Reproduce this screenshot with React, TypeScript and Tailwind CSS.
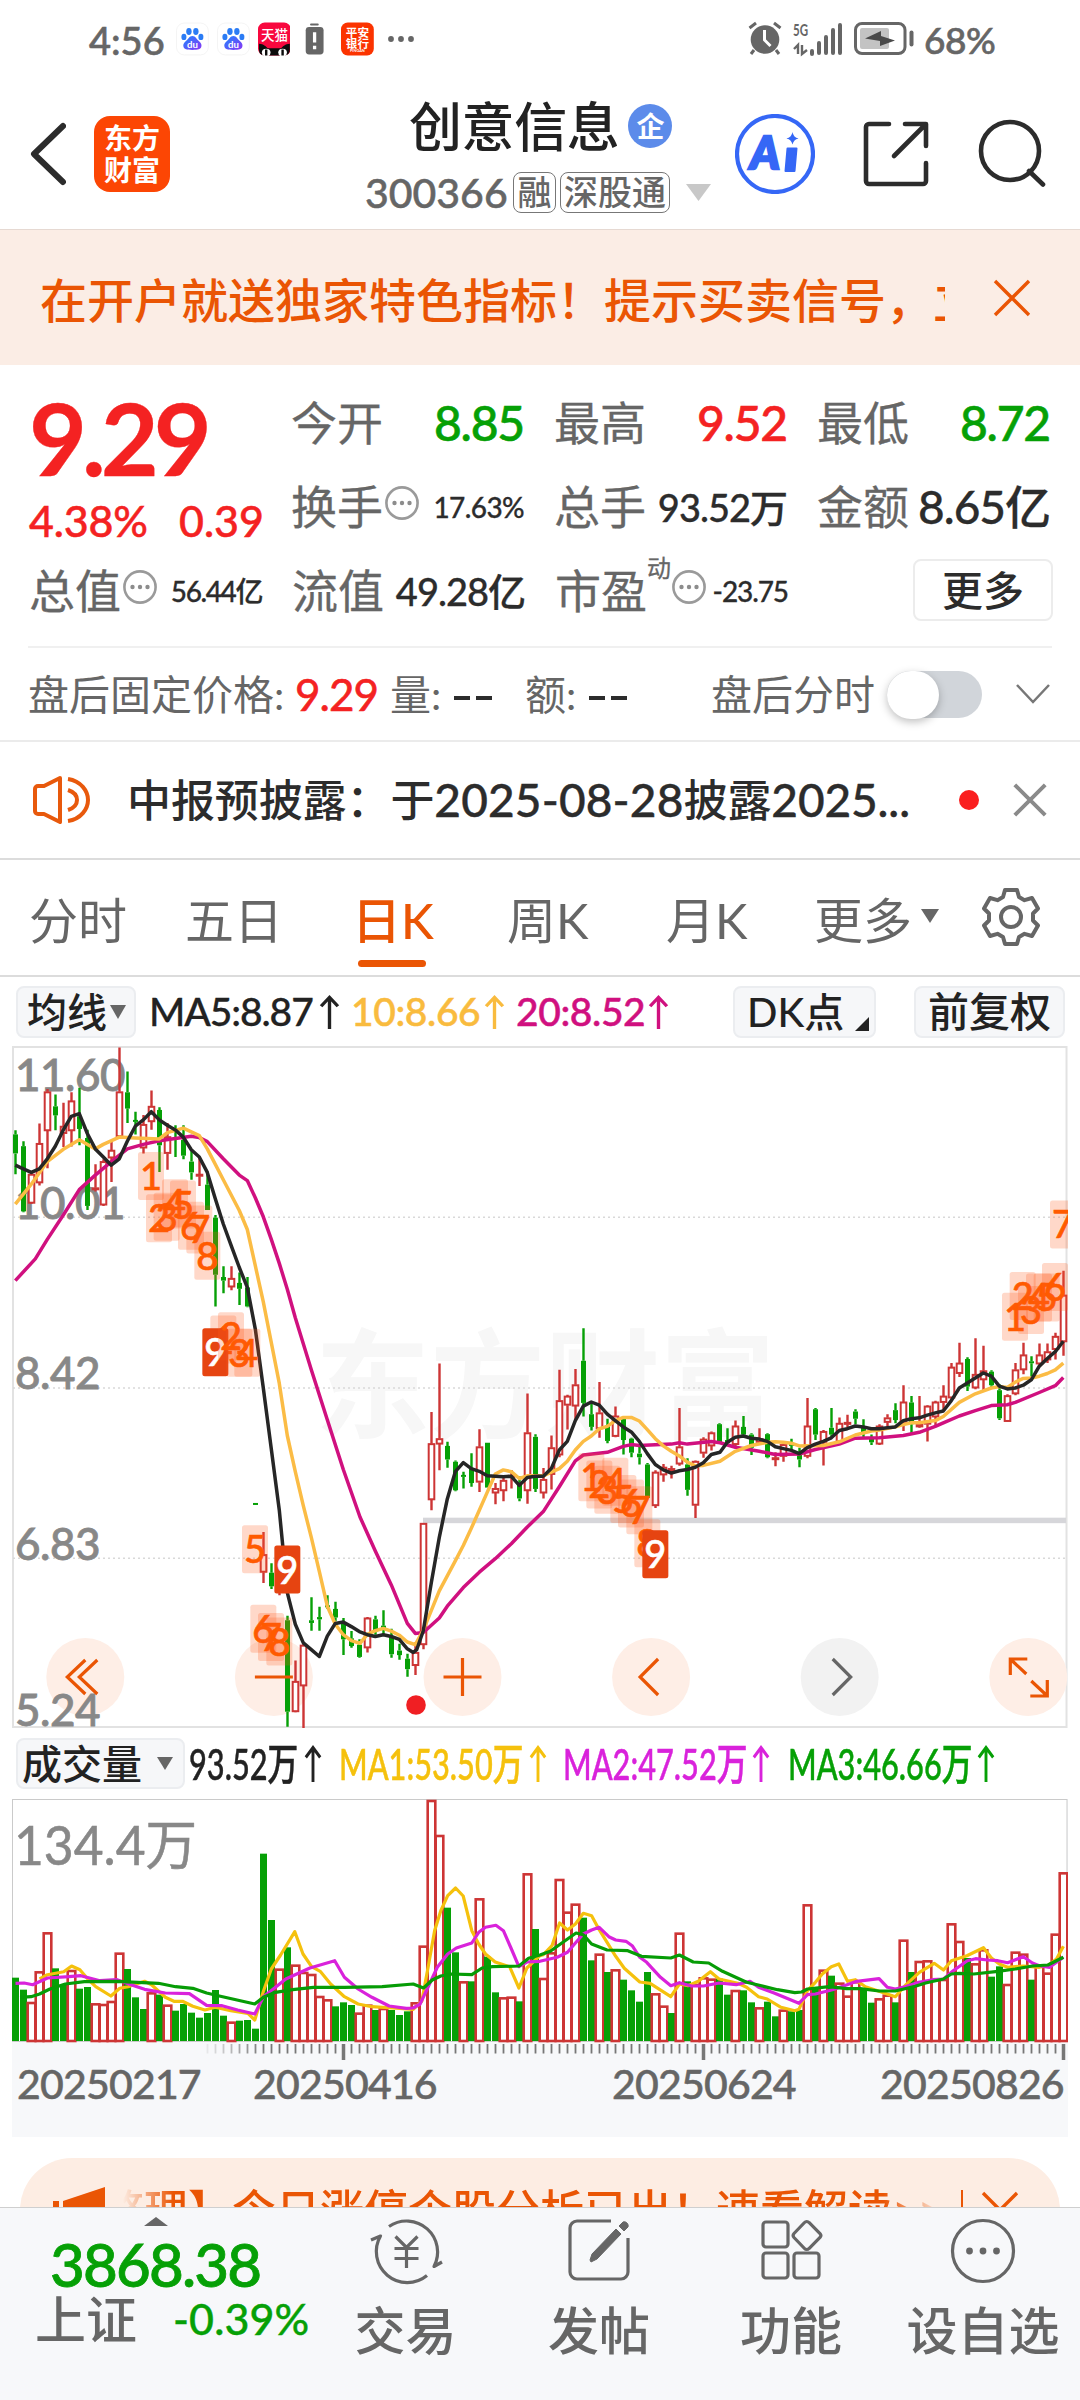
import React from 'react';

type Candle = [number, number, number, number, number];

// rise flag, high, body top, body bottom, low
const candles: Candle[] = [
  [0, 221, 230, 272, 318], [0, 245, 256, 400, 402], [1, 312, 318, 382, 384], [1, 206, 250, 337, 343],
  [1, 130, 136, 222, 305], [0, 142, 168, 188, 221], [1, 160, 212, 228, 258], [1, 137, 156, 222, 257],
  [0, 127, 190, 218, 254], [0, 220, 238, 388, 397], [1, 296, 348, 352, 356], [1, 285, 290, 386, 388],
  [1, 247, 265, 282, 335], [1, 38, 136, 235, 237], [0, 91, 137, 173, 205], [0, 180, 198, 202, 230],
  [1, 187, 208, 260, 272], [1, 133, 168, 202, 220], [0, 170, 176, 254, 313], [1, 205, 235, 272, 308],
  [0, 210, 236, 240, 280], [0, 210, 242, 277, 285], [0, 265, 290, 314, 330], [1, 282, 318, 322, 344],
  [0, 312, 341, 397, 397], [0, 408, 414, 540, 610], [0, 521, 545, 553, 581], [1, 521, 548, 567, 574],
  [0, 535, 558, 571, 607], [0, 545, 568, 610, 612], [0, 1044, 1044, 1048, 1048], [1, 1108, 1158, 1197, 1221],
  [0, 1177, 1198, 1228, 1234], [1, 1190, 1200, 1240, 1248], [0, 1293, 1303, 1505, 1538], [1, 1392, 1438, 1505, 1506],
  [1, 1352, 1358, 1448, 1543], [0, 1252, 1303, 1309, 1326], [0, 1273, 1296, 1301, 1326], [0, 1248, 1270, 1274, 1278],
  [0, 1262, 1278, 1297, 1305], [0, 1298, 1310, 1345, 1380], [0, 1327, 1343, 1360, 1364], [0, 1345, 1357, 1384, 1386],
  [1, 1296, 1298, 1364, 1374], [0, 1293, 1301, 1328, 1335], [0, 1281, 1315, 1320, 1338], [0, 1322, 1340, 1378, 1386],
  [0, 1355, 1370, 1380, 1390], [0, 1377, 1388, 1411, 1428], [1, 1352, 1374, 1403, 1424], [1, 1088, 1089, 1357, 1367],
  [1, 843, 913, 1037, 1060], [1, 736, 902, 914, 972], [0, 909, 918, 948, 966], [0, 950, 953, 1016, 1018],
  [0, 975, 982, 986, 1012], [0, 934, 968, 1000, 1008], [1, 881, 920, 998, 1020], [0, 911, 911, 1010, 1010],
  [1, 1000, 1012, 1022, 1047], [1, 985, 994, 1017, 1040], [1, 971, 983, 987, 1012], [0, 985, 998, 1034, 1040],
  [1, 802, 889, 1017, 1046], [0, 892, 898, 1013, 1020], [1, 967, 992, 1022, 1034], [1, 895, 922, 981, 1014],
  [1, 750, 818, 938, 943], [1, 805, 808, 828, 882], [1, 748, 783, 830, 860], [0, 658, 730, 823, 853],
  [0, 825, 848, 876, 884], [1, 777, 845, 880, 900], [0, 858, 873, 907, 912], [1, 831, 852, 897, 899],
  [0, 855, 858, 905, 937], [0, 900, 902, 933, 943], [0, 915, 935, 943, 959], [0, 956, 959, 1033, 1034],
  [1, 972, 976, 1050, 1055], [1, 958, 965, 982, 997], [1, 962, 968, 972, 990], [1, 834, 920, 958, 962],
  [0, 945, 959, 1015, 1028], [1, 950, 952, 1049, 1077], [1, 899, 903, 934, 944], [1, 886, 889, 918, 928],
  [0, 868, 870, 910, 911], [0, 879, 905, 912, 913], [1, 862, 874, 915, 920], [0, 852, 876, 893, 900],
  [0, 890, 893, 922, 938], [1, 879, 902, 910, 914], [0, 890, 892, 943, 945], [1, 932, 944, 947, 963],
  [1, 912, 915, 941, 953], [0, 902, 912, 918, 930], [0, 922, 935, 948, 965], [1, 812, 874, 941, 945],
  [0, 834, 837, 893, 905], [1, 883, 886, 910, 961], [0, 834, 878, 893, 900], [1, 855, 868, 909, 913],
  [1, 849, 866, 869, 878], [0, 837, 842, 858, 870], [0, 859, 877, 890, 900], [0, 893, 900, 910, 916],
  [1, 870, 874, 914, 916], [1, 848, 856, 866, 875], [0, 824, 839, 861, 868], [1, 784, 821, 866, 885],
  [0, 808, 822, 870, 890], [1, 808, 870, 876, 878], [1, 828, 830, 870, 908], [1, 818, 821, 854, 872],
  [1, 784, 808, 822, 840], [1, 735, 744, 812, 815], [1, 690, 735, 758, 766], [0, 722, 726, 787, 797],
  [1, 680, 760, 790, 793], [1, 697, 752, 772, 797], [0, 751, 754, 784, 788], [0, 782, 795, 857, 861],
  [1, 804, 807, 864, 865], [1, 735, 750, 803, 806], [1, 690, 717, 750, 760], [0, 720, 731, 734, 765],
  [1, 692, 717, 737, 742], [1, 692, 710, 728, 735], [1, 668, 676, 705, 727], [1, 531, 585, 688, 719],
];

const ma5 =
  '46,298 70,306 94,314 118,306 142,284 166,256 190,220 214,190 238,184 262,228 286,262 310,280 334,298 358,284 382,245 406,212 430,198 454,180 478,198 502,210 526,220 550,236 574,264 598,280 622,314 646,372 670,428 694,476 718,524 742,568 766,660 790,790 814,925 838,1060 862,1242 886,1312 910,1353 934,1368 958,1383 982,1338 1006,1310 1030,1307 1054,1317 1078,1328 1102,1335 1126,1339 1150,1335 1174,1339 1198,1345 1222,1366 1240,1374 1250,1368 1270,1326 1294,1220 1318,1120 1342,1035 1366,975 1390,955 1414,968 1438,974 1462,984 1510,986 1534,985 1558,1005 1582,988 1606,985 1630,985 1654,968 1678,927 1702,908 1726,862 1750,830 1774,821 1798,828 1822,848 1846,862 1870,876 1894,887 1918,908 1942,935 1966,959 1990,971 2014,978 2038,973 2062,970 2086,965 2110,955 2134,937 2160,932 2182,910 2206,899 2230,896 2254,901 2278,903 2302,908 2326,920 2350,924 2374,928 2398,935 2422,922 2446,914 2470,908 2494,900 2518,884 2542,880 2566,874 2590,876 2614,880 2638,880 2662,878 2686,876 2710,862 2734,858 2758,856 2782,850 2806,845 2830,841 2854,818 2878,790 2902,779 2926,768 2950,757 2974,764 2998,786 3022,792 3046,790 3070,784 3094,772 3118,742 3142,725 3166,710 3190,687';
const ma10 =
  '46,384 94,340 142,290 190,263 238,242 286,262 310,252 358,236 406,238 478,240 502,226 550,216 598,233 622,262 670,330 718,398 742,440 766,520 790,600 814,690 838,780 862,895 886,975 910,1050 934,1120 958,1195 982,1272 1006,1312 1030,1335 1054,1348 1080,1354 1102,1334 1126,1326 1150,1321 1174,1327 1198,1336 1222,1351 1246,1357 1270,1325 1318,1238 1366,1172 1390,1138 1414,1100 1438,1060 1462,1020 1486,980 1510,971 1534,975 1558,990 1582,984 1630,984 1654,976 1678,968 1702,952 1726,927 1750,908 1774,896 1798,880 1822,875 1846,862 1870,855 1894,855 1918,863 1942,882 1966,902 1990,918 2014,930 2038,940 2062,954 2086,962 2110,961 2160,952 2206,930 2254,917 2302,910 2326,909 2350,910 2374,912 2398,918 2470,917 2518,909 2566,894 2614,885 2638,883 2686,876 2710,871 2734,867 2758,867 2806,862 2830,853 2878,822 2926,803 2974,790 2998,787 3022,789 3046,777 3070,769 3094,768 3118,764 3142,758 3166,750 3190,735';
const ma20 =
  '46,553 106,505 142,462 190,408 238,352 286,320 334,290 382,262 430,252 478,244 526,239 574,234 598,237 622,246 670,284 718,320 742,332 766,370 790,412 814,462 838,515 862,572 886,635 934,750 982,860 1030,970 1080,1075 1126,1150 1174,1225 1222,1310 1246,1332 1270,1330 1318,1298 1342,1272 1390,1231 1438,1197 1486,1167 1534,1134 1582,1097 1630,1063 1678,1008 1726,951 1750,938 1822,932 1870,919 1894,915 1918,917 2014,914 2038,911 2062,914 2134,908 2160,911 2206,921 2278,930 2326,937 2398,936 2446,926 2518,914 2566,901 2638,900 2710,895 2758,888 2806,875 2830,867 2878,852 2926,840 2974,829 3022,827 3046,822 3118,800 3166,785 3190,767';

// label, centre x, centre y
const signals: [number, number, number][] = [
  [1, 453, 322], [2, 477, 415], [3, 500, 412], [4, 525, 382], [5, 549, 385], [6, 573, 432], [7, 598, 440], [8, 622, 498],
  [1, 670, 683], [9, 646, 711], [2, 693, 676], [3, 718, 712], [4, 742, 712], [5, 765, 1146], [6, 790, 1322], [7, 813, 1340], [8, 838, 1350], [9, 862, 1191],
  [1, 1774, 987], [2, 1798, 1003], [3, 1822, 1015], [4, 1846, 997], [5, 1870, 1035], [6, 1893, 1045], [7, 1918, 1060], [8, 1942, 1133], [9, 1966, 1157],
  [1, 3045, 633], [2, 3068, 587], [3, 3093, 618], [4, 3117, 590], [5, 3140, 590], [6, 3165, 567], [7, 3189, 429],
];

// negative = falling day
const volumes = [
  -741, -777, 814, 722, 605, -713, -760, 718, -774, -769, 818, 820, 811, 666, -715, -800, -835, 785, -792, 822, -840, -820,
  -846, -861, -847, -778, -855, 873, -870, -868, -894, -369, -568, 714, -650, 702, 724, 730, 796, 806, -827, -815, -823, 846,
  822, -838, 832, -838, -853, -842, 815, 645, 208, 313, -531, -665, 752, -752, 503, -678, -785, 800, 798, -812, 428, -595,
  742, 665, 445, 543, 519, -561, -689, 669, -724, 716, -747, -779, -813, -724, 788, 825, -847, 606, -752, 760, 740, 744,
  -744, -792, 778, -779, -815, 830, -813, -857, 837, -842, -838, 521, -772, 717, -735, 756, 795, 752, -778, -816, 803, 792,
  -815, 627, -724, 691, 689, 745, 745, 578, 631, -682, 698, 656, -738, -707, 760, 663, 669, -747, 705, 726, 609, 425,
];

const volMa1 =
  '115,745 138,732 185,723 208,706 232,717 255,745 278,768 322,796 348,773 372,768 420,752 440,762 480,800 505,812 530,812 560,827 595,838 625,830 670,840 720,848 740,868 765,782 788,715 815,673 856,603 880,670 905,708 930,722 960,760 1000,798 1040,820 1080,828 1140,832 1200,836 1225,812 1245,700 1262,600 1280,540 1300,495 1323,472 1345,496 1370,600 1390,640 1410,670 1438,694 1480,708 1507,772 1530,712 1568,675 1578,672 1603,645 1625,577 1648,598 1671,580 1694,548 1718,555 1740,597 1788,677 1813,713 1858,754 1888,758 1948,798 1973,760 1998,765 2028,752 2063,723 2088,745 2143,758 2168,770 2203,798 2228,805 2268,830 2308,840 2320,836 2345,780 2368,755 2388,730 2414,708 2436,700 2461,752 2484,747 2513,768 2553,782 2600,798 2628,765 2670,725 2713,698 2740,718 2763,690 2808,675 2856,651 2879,682 2902,700 2926,710 2972,706 3018,710 3042,705 3068,685 3088,647';
const volMa2 =
  '45,758 70,757 95,762 138,742 200,738 235,735 290,750 340,747 380,762 420,776 480,787 550,789 600,824 645,825 690,838 740,850 765,798 800,770 830,745 900,712 972,690 1000,740 1040,775 1080,800 1130,826 1180,833 1200,832 1220,820 1245,765 1270,710 1300,670 1325,652 1370,637 1390,605 1410,590 1440,584 1462,600 1485,655 1507,708 1530,694 1568,692 1618,680 1648,665 1671,637 1694,610 1718,598 1740,590 1768,618 1788,628 1818,632 1836,645 1858,680 1878,695 1918,740 1948,765 1973,756 2008,766 2043,766 2088,757 2138,762 2178,752 2203,770 2248,787 2320,818 2345,792 2368,790 2418,777 2458,763 2488,752 2553,744 2577,770 2600,775 2628,768 2668,755 2708,747 2740,745 2768,720 2809,690 2833,684 2868,688 2898,690 2926,696 2972,678 2998,697 3018,705 3048,710 3088,680';
const volMa3 =
  '58,800 90,798 115,790 145,775 190,760 245,753 340,752 460,758 510,768 560,773 600,787 640,797 740,820 765,800 800,785 850,777 910,770 1000,770 1110,768 1200,760 1230,772 1255,748 1280,736 1310,730 1370,732 1400,712 1430,708 1507,706 1535,683 1568,673 1598,662 1648,625 1673,607 1694,612 1718,640 1763,658 1823,660 1863,677 1948,682 1973,673 2013,694 2058,697 2098,722 2168,755 2258,777 2308,786 2328,784 2345,775 2408,768 2458,774 2498,774 2553,781 2600,781 2658,767 2688,757 2740,745 2763,730 2786,728 2828,730 2898,722 2948,715 2998,706 3043,703 3088,680';

const RED = '#cd3535';
const GREEN = '#06a006';
const slotX = (i: number) => 15.5 + i * 8;
const priceY = (v: number) => (v - 37) / 2.2085 + 1;
const volY = (v: number) => (v - 208) / 3 + 1;

const scalePoints = (points: string, kx: number, fy: (v: number) => number) =>
  points
    .split(' ')
    .map((p) => {
      const [x, y] = p.split(',').map(Number);
      return `${(x / kx).toFixed(1)},${fy(y).toFixed(1)}`;
    })
    .join(' ');

const Line: React.FC<{ points: string; color: string; width?: number }> = ({ points, color, width = 3.5 }) => (
  <polyline points={points} fill="none" stroke={color} strokeWidth={width} strokeLinejoin="round" />
);

const UpArrow: React.FC<{ className?: string }> = ({ className = '' }) => (
  <svg viewBox="0 0 20 36" preserveAspectRatio="none" className={`shrink-0 ${className}`} fill="none" stroke="currentColor" strokeWidth="3.2">
    <path d="M10 36V2M2 12 10 2.5 18 12" />
  </svg>
);

const Cross: React.FC<{ className: string; stroke?: number }> = ({ className, stroke = 3.4 }) => (
  <svg viewBox="0 0 38 38" className={`shrink-0 ${className}`} fill="none" stroke="currentColor" strokeWidth={stroke}>
    <path d="M2 2 36 36M36 2 2 36" />
  </svg>
);

const Caret: React.FC<{ className: string }> = ({ className }) => (
  <svg viewBox="0 0 16 14" preserveAspectRatio="none" className={`shrink-0 ${className}`} fill="currentColor">
    <path d="M0 0h16L8 14z" />
  </svg>
);

const Info: React.FC = () => (
  <svg viewBox="0 0 36 36" className="ml-px h-9 w-9 shrink-0 -translate-y-1" fill="#8c8c8c">
    <circle cx="18" cy="18" r="15.6" fill="none" stroke="#9a9a9a" strokeWidth="2.6" />
    <circle cx="10.5" cy="18" r="2.2" />
    <circle cx="18" cy="18" r="2.2" />
    <circle cx="25.5" cy="18" r="2.2" />
  </svg>
);

const Baidu: React.FC = () => (
  <svg viewBox="0 0 34 34" className="h-[34px] w-[34px]">
    <defs>
      <linearGradient id="paw" x1="0" y1="0" x2="1" y2="1">
        <stop offset="0" stopColor="#1a86ff" />
        <stop offset="1" stopColor="#8a35f5" />
      </linearGradient>
    </defs>
    <rect x=".5" y=".5" width="33" height="33" rx="8" fill="#fff" stroke="#f4f4f4" />
    <g fill="#2b7cf5">
      <ellipse cx="13.4" cy="9.2" rx="2.8" ry="3.6" />
      <ellipse cx="20.6" cy="9.2" rx="2.8" ry="3.6" />
      <ellipse cx="8.2" cy="14.8" rx="2.6" ry="3.3" />
      <ellipse cx="25.8" cy="14.8" rx="2.6" ry="3.3" />
    </g>
    <path d="M17 13.8c3.4 0 4 3 6.4 5 2.6 2.2 3.4 3.8 2.9 6-.6 2.9-3.3 3.5-9.3 3.5s-8.7-.6-9.3-3.5c-.5-2.2.3-3.8 2.9-6 2.4-2 3-5 6.4-5z" fill="url(#paw)" />
    <text x="17" y="26" textAnchor="middle" fontSize="10" fontWeight="700" fill="#fff">du</text>
  </svg>
);

const StatusBar: React.FC = () => (
  <div className="flex h-[78px] items-center pt-1 pl-[89px] text-[38px] leading-none text-[#666] [-webkit-text-stroke:0.6px]">
    <span className="w-[87px] -translate-y-px">4:56</span>
    <div className="flex h-[34px] w-[240px] items-center gap-2 -translate-y-0.5 [-webkit-text-stroke:0]">
      <Baidu />
      <Baidu />
      <svg viewBox="0 0 34 34" className="h-[34px] w-[34px]">
        <rect width="34" height="34" rx="7" fill="#f8083e" />
        <path d="M1 22c5 0 7 3 9 4.5h14c2-1.5 4-4.5 9-4.5v6c0 4-2 6-6 6H7c-4 0-6-2-6-6z" fill="#0c0c0c" />
        <ellipse cx="8.5" cy="31" rx="4.5" ry="4" fill="#fff" />
        <ellipse cx="25.5" cy="31" rx="4.5" ry="4" fill="#fff" />
        <path d="M8.5 28v6M25.5 28v6" stroke="#0c0c0c" strokeWidth="2.5" />
        <text x="17" y="18.5" textAnchor="middle" fontSize="14" fontWeight="500" fill="#fff">天猫</text>
      </svg>
      <svg viewBox="0 0 34 34" className="h-[34px] w-[34px]" fill="#666">
        <rect x="12.5" y="1" width="9" height="2" rx="1" />
        <rect x="8" y="4.5" width="18.5" height="28.5" rx="3.5" />
        <path d="M17.2 10v10.5M17.2 24v3.5" stroke="#fff" strokeWidth="3.4" />
      </svg>
      <svg viewBox="0 0 34 34" className="ml-0.5 h-[34px] w-[34px]">
        <rect width="34" height="34" rx="7" fill="#fb3300" />
        <g fill="#fff" textAnchor="middle" fontWeight="700">
          <text x="17" y="14.5" fontSize="12">平安</text>
          <text x="17" y="26" fontSize="12">银行</text>
          <text x="17" y="31" fontSize="4">PINGAN</text>
        </g>
      </svg>
      <svg viewBox="0 0 28 6" className="ml-1.5 h-1.5 w-7 shrink-0" fill="#666">
        <circle cx="3" cy="3" r="2.9" />
        <circle cx="13" cy="3" r="2.9" />
        <circle cx="23" cy="3" r="2.9" />
      </svg>
    </div>
    <svg viewBox="0 0 166 36" className="ml-[332px] h-9 w-[166px] -translate-y-0.5 [-webkit-text-stroke:0]" fill="#666">
      <circle cx="17" cy="18.5" r="14.3" />
      <path d="M1.5 7 8 2M32.5 7 26 2M6 29l-3 4M28 29l3 4" stroke="#666" strokeWidth="3" />
      <path d="M16.5 9v10l6 6" fill="none" stroke="#fff" strokeWidth="3" />
      <text x="45" y="15" fontSize="17" fontWeight="700" textLength="15" lengthAdjust="spacingAndGlyphs">5G</text>
      <path d="M50 33V24l-4 4M54 24v9l5-4" fill="none" stroke="#666" strokeWidth="2.4" />
      <path d="M64 33v-3M71 32V22M78 32V16M85 32V9M92 32V4" stroke="#666" strokeWidth="4" strokeLinecap="round" />
      <rect x="107.5" y="2.5" width="49.5" height="30" rx="6.5" fill="none" stroke="#666" strokeWidth="3" />
      <rect x="112" y="7" width="29" height="21" rx="2" fill="#c3c3c3" />
      <path d="M117 17.5 133 10v5l14 4.5-15 5.5v-5z" fill="#4a4a4a" />
      <rect x="161.5" y="9.5" width="4" height="16" rx="2" />
    </svg>
    <span className="ml-[10px] text-[37px] tracking-[-0.5px] -translate-y-0.5">68%</span>
  </div>
);

const Header: React.FC = () => (
  <header className="flex h-[152px] border-b border-[#e6d9d2] text-[#2c2c2c]">
    <svg viewBox="0 0 36 64" className="mt-[44px] ml-[30px] h-16 w-9" fill="none" stroke="currentColor" strokeWidth="6" strokeLinecap="round" strokeLinejoin="round">
      <path d="M33 4 4 32l29 28" />
    </svg>
    <div className="mt-[38px] ml-7 flex h-[76px] w-[76px] flex-col items-center justify-center rounded-2xl bg-[#fc4604] text-[28px] leading-[32px] font-bold text-white">
      <span>东方</span>
      <span>财富</span>
    </div>
    <div className="ml-[193px] w-[368px] pt-5">
      <div className="flex h-[56px] items-center pl-[46px]">
        <span className="text-[53px] leading-none tracking-[-0.4px] text-[#222]">创意信息</span>
        <span className="ml-[9px] flex h-[44px] w-[44px] items-center justify-center rounded-full bg-[#5c8bea] text-[28px] leading-none font-bold text-white">企</span>
      </div>
      <div className="mt-[17px] flex h-[42px] items-center text-[#666]">
        <span className="w-[150px] pl-0.5 text-[41px] leading-none [-webkit-text-stroke:0.5px]">300366</span>
        <span className="flex h-[41px] w-[43px] items-center justify-center rounded-lg border border-[#777] text-[34px] leading-none">融</span>
        <span className="ml-1 flex h-[41px] w-[110px] items-center justify-center rounded-lg border border-[#777] text-[34px] leading-none">深股通</span>
        <Caret className="ml-[16px] h-[17px] w-[25px] text-[#c8c8c8]" />
      </div>
    </div>
    <svg viewBox="0 0 80 80" className="mt-9 ml-1 h-20 w-20 [-webkit-text-stroke:0]" fill="#3567f6">
      <circle cx="40" cy="40" r="38" fill="none" stroke="#3567f6" strokeWidth="4.2" />
      <text x="30" y="55" textAnchor="middle" fontSize="45" fontWeight="900" fontStyle="italic" stroke="#3567f6" strokeWidth="2.5">A</text>
      <path d="M52.5 34.5h9l-2 22.500h-9z" stroke="#3567f6" strokeWidth="2" strokeLinejoin="round" />
      <path d="M57.5 18c1 4 2.5 5.5 6 6.5-3.500 1-5 2.500-6 6-1-3.500-2.500-5-6-6 3.500-1 5-2.500 6-6.500z" />
    </svg>
    <svg viewBox="0 0 66 66" className="mt-[43px] ml-[48px] h-[66px] w-[66px]" fill="none" stroke="currentColor" strokeWidth="4.6" strokeLinecap="round" strokeLinejoin="round">
      <path d="M26 3H6a3 3 0 0 0-3 3v54a3 3 0 0 0 3 3h54a3 3 0 0 0 3-3V42M42 3h21v22M62 4 31 35" />
    </svg>
    <svg viewBox="0 0 68 68" className="mt-[41px] ml-[49px] h-[68px] w-[68px]" fill="none" stroke="currentColor" strokeWidth="4.6" strokeLinecap="round">
      <circle cx="32" cy="32" r="29" />
      <path d="m51 52 14 13.5" />
    </svg>
  </header>
);

const PromoBanner: React.FC = () => (
  <div className="flex h-[135px] items-center bg-[#fbede5] pt-1 text-[#ea5504]">
    <div className="ml-[40px] w-[905px] overflow-hidden text-[47px] leading-[64px] whitespace-nowrap">
      在开户就送独家特色指标！提示买卖信号，立即开户
    </div>
    <Cross className="ml-[48px] h-[38px] w-[38px] -translate-y-0.5" />
  </div>
);

const Cell: React.FC<{ label: string; info?: boolean; children?: React.ReactNode }> = ({ label, info, children }) => (
  <div className="flex h-[84px] w-[233px] items-center leading-none">
    <span className="text-[46px] font-normal text-[#666] [-webkit-text-stroke:0.3px]">{label}</span>
    {info && <Info />}
    <span className="flex-1 text-right whitespace-nowrap text-[#2c2c2c]">{children}</span>
  </div>
);

const Quote: React.FC = () => (
  <section className="h-[281px] pt-[16px] pl-[29px] [-webkit-text-stroke:0.3px]">
    <div className="flex">
      <div className="h-[168px] w-[263px] leading-none text-[#f42222]">
        <div className="h-[118px] pt-[6px] text-[100px] font-bold tracking-[-5px]">9.29</div>
        <div className="flex text-[43px] [-webkit-text-stroke:0.5px]">
          <span className="w-[150px] tracking-[-0.2px]">4.38%</span>
          <span>0.39</span>
        </div>
      </div>
      <div className="grid grid-cols-[263px_263px_263px]">
        <Cell label="今开">
          <span className="text-[48px] tracking-[-1.2px] text-[#06a006] [-webkit-text-stroke:0.6px]">8.85</span>
        </Cell>
        <Cell label="最高">
          <span className="text-[48px] tracking-[-1.2px] text-[#f42222] [-webkit-text-stroke:0.6px]">9.52</span>
        </Cell>
        <Cell label="最低">
          <span className="text-[48px] tracking-[-1.2px] text-[#06a006] [-webkit-text-stroke:0.6px]">8.72</span>
        </Cell>
        <Cell label="换手" info>
          <span className="text-[28px] tracking-[-0.6px]">17.63%</span>
        </Cell>
        <Cell label="总手">
          <span className="text-[38px] tracking-[-1px]">93.52万</span>
        </Cell>
        <Cell label="金额">
          <span className="text-[46px] tracking-[-1px]">8.65亿</span>
        </Cell>
      </div>
    </div>
    <div className="grid grid-cols-[263px_263px_263px_263px]">
      <Cell label="总值" info>
        <span className="text-[28px] tracking-[-1.4px]">56.44亿</span>
      </Cell>
      <Cell label="流值">
        <span className="text-[38px] tracking-[-1px]">49.28亿</span>
      </Cell>
      <div className="flex h-[84px] w-[233px] items-center leading-none">
        <span className="text-[46px] font-normal text-[#666]">市盈</span>
        <span className="mb-[46px] w-[23px] text-[24px] font-normal text-[#666]">动</span>
        <Info />
        <span className="flex-1 text-right text-[28px] tracking-[-1.1px] text-[#2c2c2c]">-23.75</span>
      </div>
      <div className="flex h-[84px] items-center pb-0.5 pl-[95px]">
        <div className="flex h-[62px] w-[140px] items-center justify-center rounded-lg border-2 border-[#ececec] text-[41px] leading-none text-[#2c2c2c] [-webkit-text-stroke:0]">更多</div>
      </div>
    </div>
  </section>
);

const AfterHours: React.FC = () => (
  <div className="flex h-[96px] items-center border-b-2 border-[#ebebeb] pt-0.5 pl-[28px] text-[41px] leading-none font-normal text-[#666]">
    <span className="w-[267px] whitespace-nowrap">盘后固定价格:</span>
    <span className="w-[95px] text-[44px] tracking-[-1px] text-[#f42222] [-webkit-text-stroke:0.6px]">9.29</span>
    <span className="w-[64px]">量:</span>
    <span className="flex w-[71px] gap-1.5 pt-2 text-[#2c2c2c]">
      <i className="h-1 w-4 bg-current" />
      <i className="h-1 w-4 bg-current" />
    </span>
    <span className="w-[64px]">额:</span>
    <span className="flex w-[122px] gap-1.5 pt-2 text-[#2c2c2c]">
      <i className="h-1 w-4 bg-current" />
      <i className="h-1 w-4 bg-current" />
    </span>
    <span className="w-[176px]">盘后分时</span>
    <span className="h-[47px] w-[95px] rounded-full bg-[#d1d5da]">
      <i className="block h-[48px] w-[52px] rounded-full bg-white shadow-[0_3px_8px_rgba(0,0,0,0.25)]" />
    </span>
    <svg viewBox="0 0 34 20" className="ml-[34px] h-5 w-[34px]" fill="none" stroke="#777" strokeWidth="2.5">
      <path d="m1 1 16 17L33 1" />
    </svg>
  </div>
);

const Notice: React.FC = () => (
  <div className="flex h-[118px] items-center border-b-2 border-[#dcdcdc] pl-[33px] leading-none">
    <svg viewBox="0 0 58 50" className="h-[50px] w-[58px]" fill="none" stroke="#e8590c" strokeWidth="4" strokeLinejoin="round">
      <path d="M27 3 11 11H5a3 3 0 0 0-3 3v22a3 3 0 0 0 3 3h6l16 8z" />
      <path d="M35 15c6 2 9 6 9 10s-3 8-9 10M35 4c13 2 20 12 20 21s-7 19-20 21" />
    </svg>
    <span className="ml-9 w-[832px] text-[44px] tracking-[-0.1px] whitespace-nowrap text-[#2c2c2c]">
      中报预披露：于<span className="text-[46px] tracking-[0.15px] [-webkit-text-stroke:0.4px]">2025-08-28</span>披露
      <span className="text-[46px] [-webkit-text-stroke:0.4px]">2025...</span>
    </span>
    <i className="h-5 w-5 rounded-full bg-[#fa1e1e]" />
    <Cross className="ml-[34px] h-[34px] w-[34px] text-[#8a8a8a]" stroke={4.4} />
  </div>
);

const Tabs: React.FC = () => (
  <nav className="flex h-[117px] items-center border-b-2 border-[#dcdcdc] pt-[5px] pl-[29px] text-[49px] leading-none font-normal text-[#666]">
    <span className="w-[156px]">分时</span>
    <span className="w-[167px]">五日</span>
    <span className="relative w-[155px] font-medium text-[#ea5504]">
      日K
      <i className="absolute top-[64px] left-[6px] h-[7px] w-[68px] rounded-full bg-current" />
    </span>
    <span className="w-[159px]">周K</span>
    <span className="w-[148px]">月K</span>
    <span className="w-[107px]">更多</span>
    <Caret className="h-[14px] w-[18px] -translate-y-1" />
    <svg viewBox="0 0 60 60" className="ml-[42px] h-[60px] w-[60px] -translate-y-[3px]" fill="none" stroke="#666" strokeWidth="4" strokeLinejoin="round">
      <path d="M24 3h12l2 7 5.5 3.2L51 11l6 10.5-5 5v7l5 5L51 49l-7.5-2.2L38 50l-2 7H24l-2-7-5.5-3.2L9 49 3 38.5l5-5v-7l-5-5L9 11l7.5 2.2L22 10z" />
      <circle cx="30" cy="30" r="10" />
    </svg>
  </nav>
);

const PriceBar: React.FC = () => (
  <div className="flex h-[69px] items-center pl-4 text-[39px] leading-none text-[#222]">
    <div className="flex h-[52px] w-[120px] items-center rounded-lg border-2 border-[#ebedf0] bg-[#f6f7f9] pl-[9px] text-[40px]">
      均线
      <Caret className="ml-[3px] h-[14px] w-4 text-[#666]" />
    </div>
    <span className="ml-[13px] w-[170px] tracking-[-1.1px] [-webkit-text-stroke:0.3px]">MA5:8.87</span>
    <UpArrow className="h-[34px] w-[21px]" />
    <span className="ml-[11px] w-[133px] tracking-[-0.4px] text-[#f9bb3e] [-webkit-text-stroke:0.5px]">10:8.66</span>
    <UpArrow className="h-[34px] w-[21px] text-[#f9bb3e]" />
    <span className="ml-[11px] w-[132px] tracking-[-0.4px] text-[#d0107f] [-webkit-text-stroke:0.5px]">20:8.52</span>
    <UpArrow className="h-[34px] w-[21px] text-[#d0107f]" />
    <div className="relative ml-[64px] flex h-[52px] w-[143px] items-center rounded-lg border-2 border-[#ebedf0] bg-[#f6f7f9] pl-3 text-[40px]">
      DK点
      <svg viewBox="0 0 14 14" className="absolute right-[5px] bottom-[5px] h-[14px] w-[14px]">
        <path d="M14 0v14H0z" fill="#222" />
      </svg>
    </div>
    <div className="ml-[38px] flex h-[52px] w-[151px] items-center justify-center rounded-lg border-2 border-[#ebedf0] bg-[#f6f7f9] text-[41px]">前复权</div>
  </div>
);

const ctlPaths = ['M39 22 21 39l18 17M51 22 33 39l18 17', 'M20 39h38', 'M20 39h38M39 20v38', 'M46 21 28 39l18 18', 'M32 21l18 18-18 18', 'M38 21H21v16M22 22l15 14M41 58h17V42M57 57 42 43'];

const PriceChart: React.FC = () => (
  <div className="ml-3 h-[682px] w-[1056px]">
    <svg viewBox="12 0 1056 682" className="block h-full w-full">
      <rect x="13" y="1" width="1053.5" height="680" fill="#fff" stroke="#e2e2e2" strokeWidth="2" />
      <text x="315" y="383" fontSize="118" fontWeight="700" fill="#f7f7f7" textLength="460" lengthAdjust="spacingAndGlyphs">东方财富</text>
      {[413, 790, 1166].map((v) => (
        <line key={v} x1="13" x2="1066" y1={priceY(v)} y2={priceY(v)} stroke="#d9d9d9" strokeWidth="1.5" strokeDasharray="2 3" />
      ))}
      <rect x="423" y={priceY(1082) - 2.5} width="643" height="5.5" fill="#d6d6da" />
      {ctlPaths.map((d, i) => (
        <circle key={d} cx={85.3 + i * 188.6} cy="631" r="39" fill={i === 4 ? '#f2f2f2' : '#feeee6'} />
      ))}
      <g fontSize="44" fill="#888" stroke="#888" strokeWidth="0.8" letterSpacing="-0.5">
        <text x="15" y="45">11.60</text>
        <text x="15" y="173">10.01</text>
        <text x="15" y="343">8.42</text>
        <text x="15" y="514">6.83</text>
        <text x="15" y="680">5.24</text>
      </g>
      {candles.map(([up, high, top, bottom, low], i) => {
        const x = slotX(i);
        const color = up ? RED : GREEN;
        const y1 = priceY(top);
        const h = Math.max(priceY(bottom) - y1, 2);
        return (
          <g key={i} stroke={color}>
            <path d={`M${x} ${priceY(high)}V${y1}M${x} ${y1 + h}V${priceY(low)}`} strokeWidth="2.4" />
            {up ? (
              <rect x={x - 2.8} y={y1 + 0.5} width="5.6" height={Math.max(h - 1, 1)} fill="#fff" strokeWidth="2" />
            ) : (
              <rect x={x - 2.5} y={y1} width="5" height={h} fill={color} stroke="none" />
            )}
          </g>
        );
      })}
      <Line points={scalePoints(ma20, 3, priceY)} color="#d0107f" />
      <Line points={scalePoints(ma10, 3, priceY)} color="#fbbc45" />
      <Line points={scalePoints(ma5, 3, priceY)} color="#262626" />
      {signals.map(([n, sx, sy], i) => {
        const x = sx / 3;
        const y = priceY(sy);
        const nine = n === 9;
        const ink = nine ? '#fff' : '#ff5a00';
        return (
          <g key={i}>
            <rect x={x - 13} y={y - 24} width="26" height="48" rx="2.5" fill={nine ? '#e64411' : '#ff5a1e'} fillOpacity={nine ? 1 : 0.24} />
            <text x={x} y={y + 14} textAnchor="middle" fontSize="38" fill={ink} stroke={ink} strokeWidth="0.6">{n}</text>
          </g>
        );
      })}
      <circle cx="416" cy="659" r="9.8" fill="#f01f23" />
      {ctlPaths.map((d, i) => (
        <path key={d} d={d} transform={`translate(${46.3 + i * 188.6} 592)`} fill="none" stroke={i === 4 ? '#666' : '#ea5504'} strokeWidth="3.2" />
      ))}
    </svg>
  </div>
);

const volLegend = [
  { text: '93.52万', cls: 'text-[#222]', box: 'w-[117px]', gap: 'mr-[15px]' },
  { text: 'MA1:53.50万', cls: 'text-[#f5c10d]', box: 'w-[192px]', gap: 'mr-[14px]' },
  { text: 'MA2:47.52万', cls: 'text-[#d922db]', box: 'w-[191px]', gap: 'mr-[16px]' },
  { text: 'MA3:46.66万', cls: 'text-[#06a006]', box: 'w-[191px]', gap: '' },
];

const VolumeBar: React.FC = () => (
  <div className="flex h-[71px] items-center pl-4 leading-none text-[#222]">
    <div className="mr-[4px] flex h-[51px] w-[169px] items-center rounded-lg border-2 border-[#ebedf0] bg-[#f6f7f9] pl-1 text-[40px]">
      成交量
      <Caret className="ml-[15px] h-[13px] w-4 text-[#666]" />
    </div>
    {volLegend.map((l) => (
      <div key={l.text} className={`flex shrink-0 items-center ${l.cls} ${l.gap}`}>
        <span className={`text-[43px] whitespace-nowrap [-webkit-text-stroke:0.5px] ${l.box}`}>
          <span className="inline-block origin-left scale-x-[0.715]">{l.text}</span>
        </span>
        <UpArrow className="h-[37px] w-[18px] -translate-x-0.5" />
      </div>
    ))}
  </div>
);

const VolumeChart: React.FC = () => (
  <div className="ml-3 h-[338px] w-[1056px] bg-[#f7f8fa]">
    <svg viewBox="12 0 1056 262" className="block h-[262px] w-full">
      <rect x="12.5" y=".5" width="1054.5" height="242" fill="#fff" stroke="#cacaca" />
      {volumes.map((v, i) => {
        const y = volY(Math.abs(v));
        return v > 0 ? (
          <rect key={i} x={slotX(i) - 3.8} y={y + 1} width="7.6" height={241 - y} fill="#fff" stroke={RED} strokeWidth="2.6" />
        ) : (
          <rect key={i} x={slotX(i) - 3.5} y={y} width="7" height={242 - y} fill={GREEN} />
        );
      })}
      <Line points={scalePoints(volMa1, 2.904, volY)} color="#f5c10d" width={3.2} />
      <Line points={scalePoints(volMa2, 2.904, volY)} color="#d922db" width={3.2} />
      <Line points={scalePoints(volMa3, 2.904, volY)} color="#069c06" width={3.2} />
      <text x="14" y="66" fontSize="54" fontWeight="400" fill="#888" stroke="#888" strokeWidth="0.6" textLength="183" lengthAdjust="spacingAndGlyphs">134.4万</text>
      {volumes.map((_, i) => {
        if (i < 24) return null;
        const major = i % 45 === 41;
        return <line key={i} x1={slotX(i)} x2={slotX(i)} y1="245" y2={major ? 261 : 254.5} stroke="#777" strokeWidth={major ? 3.5 : 1.8} opacity={Math.min(1, (i - 23) / 8)} />;
      })}
    </svg>
    <div className="flex pl-[5px] text-[41px] leading-[46px] tracking-[-0.8px] text-[#666] [-webkit-text-stroke:0.5px]">
      <span className="w-[236px]">20250217</span>
      <span className="w-[359px]">20250416</span>
      <span className="w-[268px]">20250624</span>
      <span>20250826</span>
    </div>
  </div>
);

const NewsTicker: React.FC = () => (
  <div className="mt-[21px] flex h-[49px] overflow-hidden">
    <div className="ml-5 flex h-[104px] w-[1040px] shrink-0 items-center rounded-[52px] bg-[#fdede3] text-[#ea5504]">
      <svg viewBox="0 0 54 46" className="ml-[33px] h-[46px] w-[54px]" fill="currentColor">
        <path d="M0 14h6v20H0zM10 14l42-14v46L10 34z" />
      </svg>
      <div className="ml-[16px] flex w-[820px] justify-end overflow-hidden text-[44px] leading-[60px] whitespace-nowrap [mask-image:linear-gradient(to_right,transparent,black_50px,black_760px,transparent)]">
        整理】今日涨停个股分析已出！速看解读&gt;&gt;
      </div>
      <i className="ml-[18px] h-10 w-0.5 bg-current" />
      <Cross className="ml-[18px] h-[38px] w-[38px]" />
    </div>
  </div>
);

const BottomItem: React.FC<{ label: string; className: string; children: React.ReactNode }> = ({ label, className, children }) => (
  <div className={`flex flex-col items-center pt-[8px] ${className}`}>
    <svg viewBox="0 0 72 70" className="h-[70px] w-[72px] overflow-visible" fill="none" stroke="#666" strokeWidth="3.2">
      {children}
    </svg>
    <span className="mt-[19px] text-[51px] leading-none whitespace-nowrap">{label}</span>
  </div>
);

const BottomBar: React.FC = () => (
  <footer className="flex h-[193px] border-t border-[#cfcfcf] bg-[#f7f8fa] text-[#666]">
    <div className="w-[330px] pt-[9px]">
      <Caret className="ml-36 block h-[9px] w-6 rotate-180" />
      <div className="mt-[8px] pl-[50px] text-[60px] leading-[60px] tracking-[-1.8px] text-[#06a006] [-webkit-text-stroke:0.8px]">3868.38</div>
      <div className="flex items-center pl-[35px] leading-[52px]">
        <span className="w-[138px] text-[51px]">上证</span>
        <span className="text-[43px] tracking-[0.1px] text-[#06a006] -translate-y-px [-webkit-text-stroke:0.4px]">-0.39%</span>
      </div>
    </div>
    <BottomItem label="交易" className="w-[151px]">
      <path d="M19 10.5A31 31 0 0 1 64 50.5L72 46M57 59.5A31 31 0 0 1 10.5 20L1 24" strokeLinejoin="round" />
      <path d="m25.5 20.5 11 11 11-11M24.5 32.5h24M24.5 42.5h24M36.5 31v21" />
    </BottomItem>
    <BottomItem label="发帖" className="ml-[18px] w-[200px]">
      <path d="M48 5H14a7 7 0 0 0-7 7v44a7 7 0 0 0 7 7h44a7 7 0 0 0 7-7V22" />
      <path d="m27 44 2-6 24-25 5 5-24 25-6 3zM56 10l4-4c3-1 6 2 5 5l-4 4z" fill="#666" strokeWidth="1" />
    </BottomItem>
    <BottomItem label="功能" className="w-[184px]">
      <rect x="8" y="6" width="25" height="25" rx="3" />
      <rect x="8" y="37" width="25" height="25" rx="3" />
      <rect x="39" y="37" width="25" height="25" rx="3" />
      <path d="M49.5 6.5a3 3 0 0 1 4.5 0l11 11a3 3 0 0 1 0 4l-11 11a3 3 0 0 1-4.5 0l-10.5-11a3 3 0 0 1 0-4z" />
    </BottomItem>
    <BottomItem label="设自选" className="ml-[5px] w-[190px]">
      <circle cx="36" cy="35" r="30.5" />
      <g fill="#666" stroke="none">
        <circle cx="22.5" cy="35" r="3.4" />
        <circle cx="36" cy="35" r="3.4" />
        <circle cx="49.5" cy="35" r="3.4" />
      </g>
    </BottomItem>
  </footer>
);

const App: React.FC = () => {
  return (
    <div className="h-[2400px] w-[1080px] overflow-hidden bg-white font-[Lato,'Noto_Sans_CJK_SC',sans-serif] font-medium">
      <StatusBar />
      <Header />
      <PromoBanner />
      <Quote />
      <div className="mx-7 -mb-0.5 h-0.5 bg-[#f0f0f0]" />
      <AfterHours />
      <Notice />
      <Tabs />
      <PriceBar />
      <PriceChart />
      <VolumeBar />
      <VolumeChart />
      <NewsTicker />
      <BottomBar />
    </div>
  );
};

export default App;
